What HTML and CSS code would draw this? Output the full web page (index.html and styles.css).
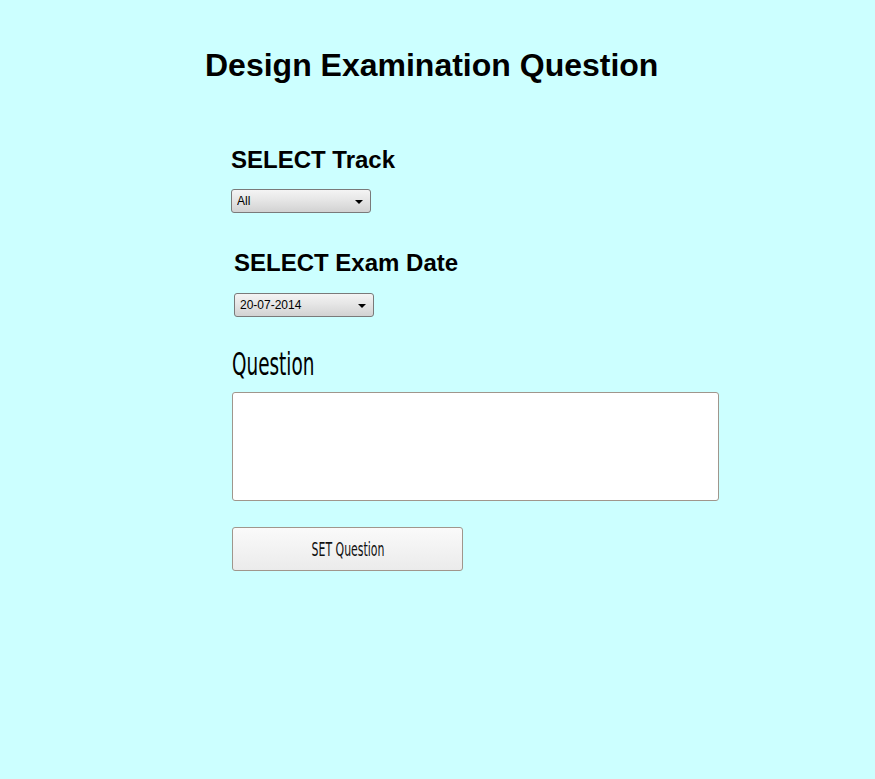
FILE: index.html
```html
<!DOCTYPE html>
<html>
<head>
<meta charset="utf-8">
<title>Design Examination Question</title>
<link rel="stylesheet" href="styles.css">
</head>
<body>
<h1 class="title">Design Examination Question</h1>
<form class="form">
  <div class="field field-track">
    <h2 class="label">SELECT Track</h2>
    <div class="select-wrap">
      <select class="select"><option>All</option></select>
    </div>
  </div>
  <div class="field field-date">
    <h2 class="label">SELECT Exam Date</h2>
    <div class="select-wrap">
      <select class="select"><option>20-07-2014</option></select>
    </div>
  </div>
  <div class="field field-question">
    <h2 class="qlabel">Question</h2>
    <textarea class="textarea"></textarea>
  </div>
  <button type="button" class="btn"><span class="btn-text">SET Question</span></button>
</form>
</body>
</html>
```
FILE: styles.css
```css
html, body {
  margin: 0;
  padding: 0;
  background: #ccffff;
  height: 100%;
}
body {
  font-family: "Liberation Sans", Arial, sans-serif;
  color: #000;
}
.title {
  margin: 0;
  padding-top: 45px;
  padding-left: 205px;
  font-size: 32px;
  font-weight: bold;
  line-height: 40px;
}
.form {
  display: flex;
  flex-direction: column;
  align-items: flex-start;
  padding-left: 231px;
  padding-top: 61px;
}
.field {
  display: flex;
  flex-direction: column;
}
.label {
  margin: 0;
  font-size: 24px;
  font-weight: bold;
  line-height: 28px;
}
.field-track .select-wrap { margin-top: 15px; }
.field-date { margin-top: 36px; padding-left: 3px; }
.field-date .select-wrap { margin-top: 16px; }
.select-wrap {
  position: relative;
  width: 140px;
  height: 24px;
}
.select {
  appearance: none;
  -webkit-appearance: none;
  width: 140px;
  height: 24px;
  box-sizing: border-box;
  border: 1px solid #7a7a7a;
  border-radius: 3px;
  background: linear-gradient(#f4f4f4, #e6e6e6 45%, #d2d2d2);
  font-family: "Liberation Sans", Arial, sans-serif;
  font-size: 12px;
  color: #000;
  padding: 0 0 0 5px;
  margin: 0;
  outline: none;
}
.select-wrap::after {
  content: "";
  position: absolute;
  right: 8px;
  top: 11px;
  border-left: 4px solid transparent;
  border-right: 4px solid transparent;
  border-top: 4px solid #000;
}
.field-question { margin-top: 30px; padding-left: 1px; }
.qlabel {
  margin: 0;
  font-family: "DejaVu Sans Condensed", "DejaVu Sans", sans-serif;
  font-stretch: condensed;
  font-weight: normal;
  font-size: 32px;
  line-height: 34px;
  transform: scaleX(0.64);
  transform-origin: left center;
  width: 200px;
  white-space: nowrap;
}
.textarea {
  margin-top: 11px;
  margin-left: 0;
  width: 487px;
  height: 109px;
  box-sizing: border-box;
  border: 1px solid #a0968c;
  border-radius: 3px;
  background: #fff;
  resize: none;
  outline: none;
}
.btn {
  margin-top: 26px;
  margin-left: 1px;
  width: 231px;
  height: 44px;
  box-sizing: border-box;
  border: 1px solid #a0968c;
  border-radius: 3px;
  background: linear-gradient(#fafafa, #ebebeb);
  cursor: pointer;
  padding: 0;
  display: flex;
  align-items: center;
  justify-content: center;
}
.btn-text {
  display: inline-block;
  font-family: "DejaVu Sans Condensed", "DejaVu Sans", sans-serif;
  font-stretch: condensed;
  font-size: 19px;
  line-height: 20px;
  color: #111;
  transform: scaleX(0.64);
  white-space: nowrap;
}
```
